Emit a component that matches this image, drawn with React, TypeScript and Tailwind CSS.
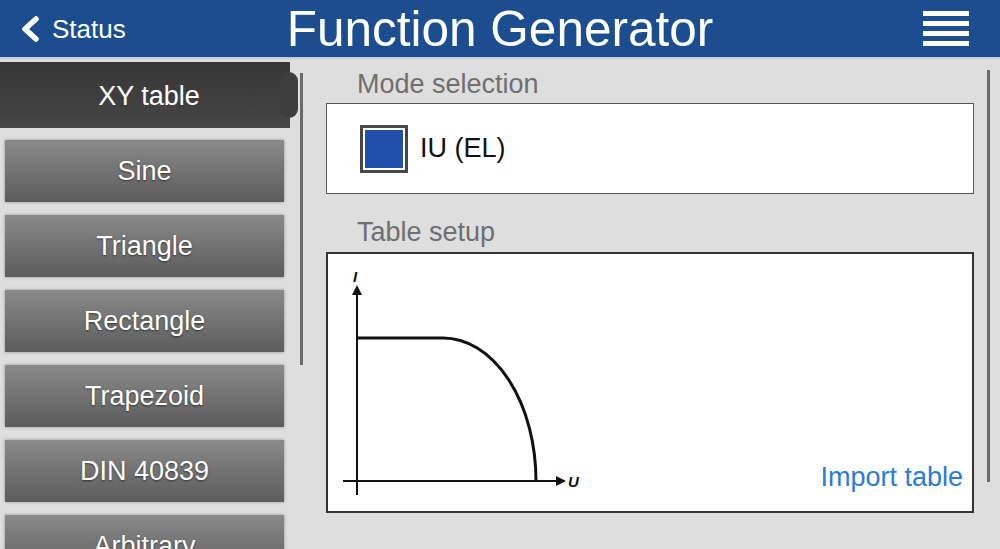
import React from 'react';

const modes = ['Sine', 'Triangle', 'Rectangle', 'Trapezoid', 'DIN 40839', 'Arbitrary'];

function ModeButton({ label }: { label: string }) {
  return (
    <div className="ml-[5px] mb-[13px] flex h-[62px] w-[279px] shrink-0 items-center justify-center bg-gradient-to-b from-[#8a8a8a] to-[#5c5c5c] shadow-[0_0_3px_rgba(0,0,0,0.35)]">
      <span className="text-[27px] text-white [text-shadow:0_1px_2px_rgba(0,0,0,0.55)]">{label}</span>
    </div>
  );
}

function CurveChart() {
  return (
    <svg width="260" height="255" viewBox="0 0 260 255" className="shrink-0">
      {/* axes */}
      <line x1="29" y1="38" x2="29" y2="241" stroke="#111" strokeWidth="2" />
      <polygon points="29,31 24,41 34,41" fill="#111" />
      <line x1="15" y1="227" x2="230" y2="227" stroke="#111" strokeWidth="2" />
      <polygon points="238,227 228,222 228,232" fill="#111" />
      <text x="25" y="28" fontSize="15" fontStyle="italic" fontWeight="bold" fill="#111" fontFamily="Liberation Sans, Arial, sans-serif">I</text>
      <text x="240" y="233" fontSize="15" fontStyle="italic" fontWeight="bold" fill="#111" fontFamily="Liberation Sans, Arial, sans-serif">U</text>
      {/* characteristic */}
      <path d="M29 84 L115 84 A93 143 0 0 1 208 227" fill="none" stroke="#111" strokeWidth="3" />
    </svg>
  );
}

export default function App() {
  return (
    <div className="h-[549px] w-[1000px] overflow-hidden bg-[#dedede] font-['Liberation_Sans',Arial,sans-serif]">
      {/* Header */}
      <header className="flex h-[59px] items-center border-b-2 border-[#c9cfda] bg-[#1c4e8f] text-white">
        <div className="flex w-[200px] items-center pl-[20px]">
          <svg width="22" height="28" viewBox="0 0 22 28">
            <polyline points="16,4 5,14 16,24" fill="none" stroke="#fff" strokeWidth="5.5" strokeLinecap="round" strokeLinejoin="round" />
          </svg>
          <span className="ml-[10px] text-[26px] leading-none">Status</span>
        </div>
        <h1 className="flex-1 text-center text-[49.5px] leading-none">Function Generator</h1>
        <div className="flex w-[200px] justify-end pr-[31px]">
          <div className="flex w-[46px] flex-col gap-[5px]">
            <div className="h-[5px] bg-white" />
            <div className="h-[5px] bg-white" />
            <div className="h-[5px] bg-white" />
            <div className="h-[5px] bg-white" />
          </div>
        </div>
      </header>

      <div className="flex">
        {/* Sidebar */}
        <div className="flex w-[296px] shrink-0 flex-col pt-[3px]">
          <div className="relative mb-[12px] flex h-[66px] w-[290px] items-center justify-center bg-gradient-to-b from-[#363636] to-[#464646] pl-[8px] pt-[3px]">
            <span className="text-[27px] text-white">XY table</span>
            <div className="absolute right-[-8px] top-[10px] h-[46px] w-[18px] rounded-full bg-[#3e3e3e]" />
          </div>
          {modes.map((m) => (
            <ModeButton key={m} label={m} />
          ))}
        </div>

        <div className="ml-[4px] mt-[14px] h-[292px] w-[3px] shrink-0 bg-[#6a6a6a]" />

        {/* Content */}
        <div className="ml-[23px] flex w-[648px] shrink-0 flex-col pt-[10px]">
          <div className="pl-[31px] text-[27px] leading-[30px] text-[#6f6f6f]">Mode selection</div>
          <div className="mt-[4px] flex h-[91px] items-center border border-[#555] bg-white pl-[33px]">
            <div className="h-[48px] w-[48px] border-[3px] border-[#474747] bg-white p-[2px]">
              <div className="h-full w-full bg-[#1f4fa8]" />
            </div>
            <span className="ml-[12px] text-[27px] text-[#111]">IU (EL)</span>
          </div>

          <div className="mt-[23px] pl-[31px] text-[27px] leading-[30px] text-[#6f6f6f]">Table setup</div>
          <div className="mt-[5px] flex h-[261px] border-2 border-[#333] bg-white">
            <CurveChart />
            <div className="flex-1" />
            <span className="mb-[19px] mr-[9px] self-end text-[27px] leading-[30px] text-[#2b7bd9]">Import table</span>
          </div>
        </div>

        <div className="ml-[13px] mt-[11px] h-[412px] w-[3px] shrink-0 bg-[#6a6a6a]" />
      </div>
    </div>
  );
}
